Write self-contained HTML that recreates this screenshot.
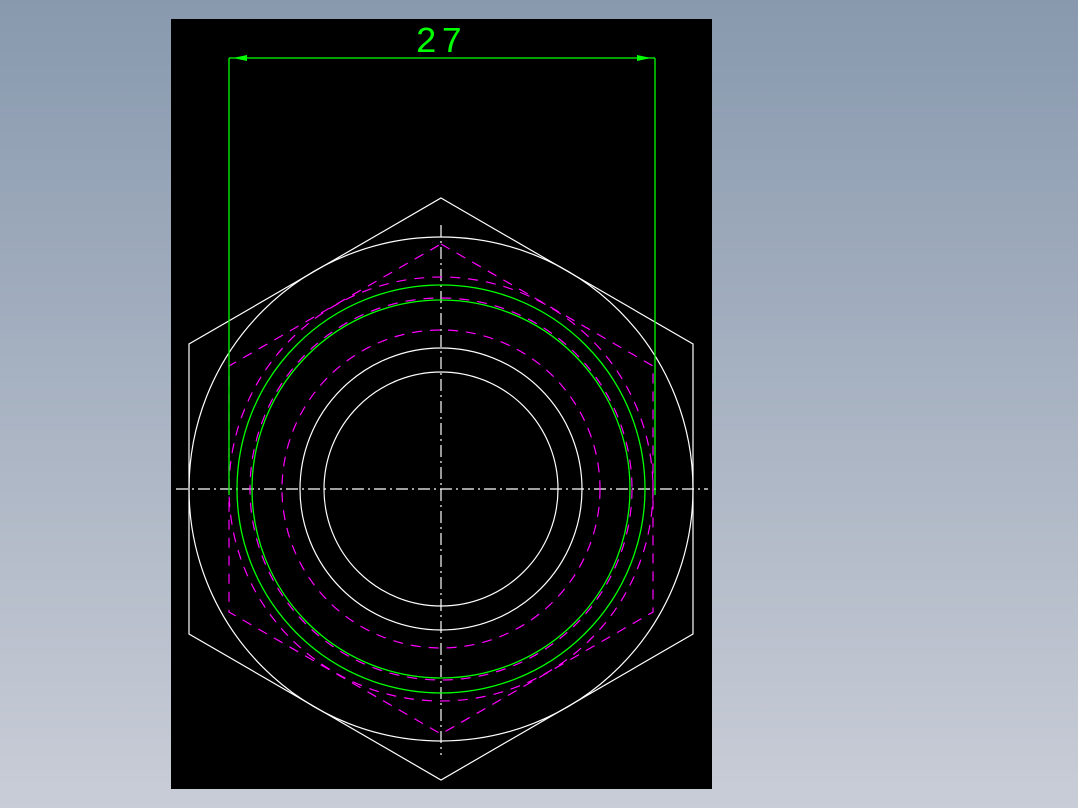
<!DOCTYPE html>
<html><head><style>
html,body{margin:0;padding:0;width:1078px;height:808px;overflow:hidden;background:linear-gradient(#8899ae,#c9cdd7);}
svg{position:absolute;left:0;top:0}
</style></head><body>
<svg width="1078" height="808" viewBox="0 0 1078 808" xmlns="http://www.w3.org/2000/svg">
<rect x="171" y="19" width="541" height="770" fill="#000"/>
<g fill="none" stroke="#fff" stroke-width="1.2">
<polygon points="441,198 693,344 693,634 441,780 189,634 189,344"/>
<circle cx="441" cy="489" r="252"/>
<circle cx="441" cy="489" r="141"/>
<circle cx="441" cy="489" r="117"/>
<line x1="176" y1="489" x2="708" y2="489" stroke-dasharray="12,4,2,4"/>
<line x1="441" y1="225" x2="441" y2="755" stroke-dasharray="12,4,2,4"/>
</g>
<g fill="none" stroke="#ff00ff" stroke-width="1.2" stroke-dasharray="10,8">
<polygon points="441,244 653,366 653,612 441,734 229,612 229,366"/>
<circle cx="441" cy="489" r="212"/>
<circle cx="441" cy="489" r="191"/>
<circle cx="441" cy="489" r="159"/>
</g>
<g fill="none" stroke="#00ff00" stroke-width="1.3">
<circle cx="441" cy="489" r="204"/>
<circle cx="441" cy="489" r="189"/>
<line x1="229" y1="58" x2="655" y2="58"/>
<line x1="229" y1="58" x2="229" y2="495"/>
<line x1="655" y1="58" x2="655" y2="495"/>
</g>
<polygon points="233,58 247,55 247,61" fill="#00ff00"/>
<polygon points="651,58 637,55 637,61" fill="#00ff00"/>
<text x="441" y="52" text-anchor="middle" font-family="Liberation Mono, monospace" font-size="36" fill="#00ff00" letter-spacing="4">27</text>
</svg>
</body></html>
